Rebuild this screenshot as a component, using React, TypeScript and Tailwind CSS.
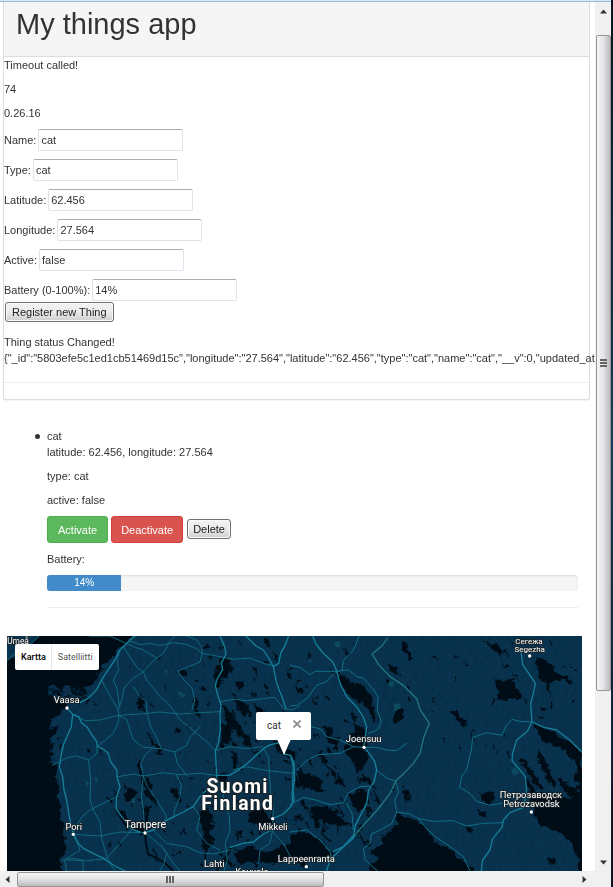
import React from "react";

const fields = [
  { id: "name", label: "Name:", value: "cat" },
  { id: "type", label: "Type:", value: "cat" },
  { id: "latitude", label: "Latitude:", value: "62.456" },
  { id: "longitude", label: "Longitude:", value: "27.564" },
  { id: "active", label: "Active:", value: "false" },
  { id: "battery", label: "Battery (0-100%):", value: "14%" },
];

const status =
  '{"_id":"5803efe5c1ed1cb51469d15c","longitude":"27.564","latitude":"62.456","type":"cat","name":"cat","__v":0,"updated_at"';

// Roads of the western half, in map units.
const westMajor = [
  "405,18 388,32 370,50 358,62 345,90 325,118 305,150 290,178 280,190 262,206 240,218",
  "201,234 210,244 218,253 236,260 246,280 262,292 276,315 290,335 292,348 310,358 325,370 332,395 350,420 352,446 360,470 350,500 348,535 362,556 372,568 396,598 420,606",
  "218,253 214,290 205,310 190,345 184,372 178,410 188,440 192,480 200,510 208,560 214,590 220,613 234,640 250,655 275,668 310,685 345,708 375,723",
  "660,18 674,50 678,72 664,100 668,118 650,150 646,168 655,200 663,225 660,250 661,300 655,340 646,362 648,400 650,436",
  "738,18 768,48 790,60 806,84 820,110 828,150 836,176 846,200 858,236",
  "820,110 836,100 842,70 856,44 866,18",
  "650,436 688,436 712,422 740,402 760,384 790,356 812,344 848,336",
  "852,372 872,376 880,410 878,470 882,510 872,530 850,552 818,566",
  "435,608 460,600 482,580 510,566 550,546 580,530 600,500 630,470 650,440",
  "690,652 730,640 760,636 790,612 816,600",
];
const westMinor = [
  "370,50 384,72 400,95 414,116 430,125 440,150 460,175 480,200 504,220 520,240 540,270 562,286 590,310 620,335 646,362",
  "388,32 420,44 450,40 480,46 520,38 556,42 590,56 606,70 650,78 700,88 750,84 790,100 820,108",
  "525,18 508,36 490,70 460,92 430,125 400,144 372,174 368,200 355,240",
  "305,150 318,176 332,200 355,240 356,272 340,310 316,330 290,350",
  "358,62 352,92 356,120 340,150 352,180 358,230",
  "218,253 256,272 300,270 330,262 355,256 420,252 480,246 540,252 600,248 660,245",
  "560,18 590,30 606,54 606,72 600,96 566,110 532,124 552,150 576,174 584,210 576,240",
  "660,215 700,208 740,212 790,206 824,202 852,236 880,240 900,226",
  "400,170 420,200 438,214 442,255 452,290 468,320 484,356 524,366 560,346 572,320 600,290",
  "355,256 380,268 390,300 400,330 430,352 484,356",
  "524,366 532,400 560,436",
  "158,406 200,384 226,378 250,384 266,390 292,370 290,350",
  "266,390 272,450 270,510 280,540 300,576 306,630 320,676 330,700 345,723",
  "355,440 400,432 430,438 490,428 540,434 600,430 650,436",
  "430,438 422,400 440,370 460,352",
  "430,438 442,470 470,510 500,560 494,576",
  "430,438 424,500 430,540 435,608",
  "530,436 544,466 540,500 524,540 520,564",
  "350,500 310,520 270,540 244,562 220,608",
  "220,613 300,618 360,606 435,608",
  "435,608 462,630 486,650 520,700 540,723",
  "460,600 500,640 560,650 600,668 640,672 690,660",
  "396,598 360,640 318,686 260,692 200,690",
  "186,690 220,685 248,690 250,723",
  "214,590 230,630 240,660 194,690 200,723",
  "650,440 668,480 672,520 688,556 690,600 676,640 682,690 672,723",
  "646,362 690,350 740,356 786,350",
  "790,356 806,380 808,430 812,490 820,540 818,566",
  "700,420 740,410 790,420 878,430",
  "818,566 822,610 850,640 866,670 880,700",
  "660,660 620,640 590,600 600,560 580,530",
  "480,723 492,700 500,670 486,650",
  "818,600 810,640 780,660 776,700",
  "21,92 50,66 90,44 118,18",
  "268,18 330,18 400,50 430,60 470,84",
];
// Roads of the eastern half, measured from its own left edge.
const eastMajor = [
  "68,18 78,42 100,70 128,96 140,122 150,160 170,200 200,230 220,262 230,290 222,350 240,374 254,394 260,420 252,456 236,480 230,520 196,586 190,624 150,660 120,690 110,723",
  "694,70 698,104 716,130 736,160 730,190 722,220 726,276 712,304 680,330 668,370 666,392 690,420 706,440 710,482 700,532 660,548 640,570 636,592 608,626 600,660 578,690 574,723",
  "726,276 762,292 800,300 836,328 876,366",
  "190,616 160,650 130,664",
  "4,380 12,400 14,450 6,490 8,520",
];
const eastBorder = ["292,24 276,48 246,72 266,104 300,140 340,166 380,206 390,238 418,280 402,320 390,370 370,400 342,430 318,452 300,490 262,540 216,590 186,626"];
const eastMinor = [
  "208,18 190,60 160,92 156,122",
  "0,106 30,112 60,134 76,124 140,124 176,120 200,140 220,144 252,180 264,200 262,240 274,276 262,300 236,310",
  "140,122 108,156 80,166 50,206 20,226 0,228",
  "64,290 90,296 110,320 150,330 190,350 222,352",
  "222,352 260,352 290,360 320,362 350,340",
  "190,350 150,370 84,374 50,392 20,420",
  "260,420 290,444 318,454 326,486 314,510 320,546 306,580 270,600 244,612 240,640 220,656 226,690 262,723",
  "320,546 360,552 386,566 430,574 490,572 530,588 580,580 638,578",
  "386,566 410,596 436,620 480,650 520,680 540,723",
  "726,276 690,274 666,268 650,284 636,316 590,308 548,322 544,360 530,420 516,438 508,472 540,490 560,514 600,526 636,520",
  "0,524 40,502 76,510 120,524 160,518 174,490 210,470 240,468",
  "0,606 50,600 90,630 120,664 126,690",
  "170,520 186,550 190,600",
];
const westLakes = [
  "411,205 424,196 436,220 430,240 414,236",
  "582,200 596,215 594,240 604,262 586,250 580,225",
  "640,120 664,98 680,100 704,118 690,130 664,150 652,180 642,150",
  "668,80 682,84 690,96 674,110 664,96",
  "664,226 690,244 710,270 730,300 746,316 760,362 736,340 716,320 694,290 672,262",
  "664,280 700,284 690,330 660,366 664,320",
  "700,200 724,216 746,232 738,260 724,250",
  "350,540 370,550 390,576 430,570 436,520 452,530 440,566 446,600 440,620 412,610 380,596",
  "372,490 392,470 410,480 398,510 380,516",
  "410,396 420,392 434,440 456,460 452,480 474,516 470,530 440,500 420,440",
  "442,300 452,320 468,350 456,344",
  "466,340 490,356 480,366 494,380 470,370",
  "600,540 620,530 634,560 630,600 636,640 616,690 606,650 612,600 598,570",
  "654,430 676,430 692,480 672,470 650,450",
  "740,548 790,540 820,580 780,590 750,570",
  "700,672 750,646 800,668 860,640 900,660 896,700 850,692 806,700 760,690 722,704",
  "820,330 870,340 860,360 890,366 884,400 860,380 830,366",
  "690,360 714,374 710,410 696,420 700,390",
  "510,480 530,470 546,520 526,510",
  "706,156 736,160 716,180",
  "760,220 792,244 800,280 780,270",
  "528,290 540,300 536,312 526,306",
  "530,122 552,116 562,132 544,138",
];
const eastLakes = [
  "140,132 170,146 186,160 216,164 230,184 242,190 246,220 262,262 266,280 244,264 224,220 190,210 168,186 150,166",
  "186,240 200,260 196,284 220,290 230,330 228,360 236,380 222,410 204,434 190,392 170,370 160,350 196,330 170,320 198,306",
  "612,144 640,154 650,150 674,140 670,162 686,180 696,206 660,208 646,214 620,206 626,180",
  "734,80 760,88 790,110 800,130 846,150 852,162 820,150 790,150 776,162 782,200 790,226 780,240 784,206 764,160 744,124",
  "590,38 620,44 640,60 634,84 610,60",
  "332,26 352,40 350,56 372,90 356,90 340,60",
  "320,240 342,240 338,270 320,284 308,276",
  "296,100 318,110 320,134 300,124",
  "478,240 500,244 512,262 534,280 520,290 500,264",
  "566,486 590,490 602,484 616,500 608,518 590,526 576,510",
  "336,476 360,484 364,506 346,516 336,500",
  "560,536 586,546 590,564 570,556",
  "776,684 794,680 796,706 780,708",
  "320,540 336,560 362,564 404,590 410,604 430,626 434,640 478,656 500,680 532,700 548,723 240,723 236,700 272,690 240,664 282,640 270,622 300,604 306,590 320,588",
  "732,278 756,290 790,306 828,330 858,352 876,366 876,474 852,450 862,420 850,390 826,366 800,352 766,340 744,310",
  "876,464 860,484 876,500 876,723 864,723 868,690 852,650 830,630 820,610 790,604 770,590 750,586 736,560 726,530 712,480 726,470 740,486 772,492 800,488 830,512 846,500 820,480 800,450 812,440 840,470",
  "742,352 760,380 776,420 800,470 790,478 766,436 746,400",
  "690,384 706,390 740,440 764,480 748,480 718,440",
  "704,440 720,450 738,486 716,484",
  "20,426 50,430 84,440 100,456 90,470 110,486 80,486 60,470 30,470",
  "60,530 110,530 140,540 156,572 190,580 150,590 112,578 92,570 80,596 64,566",
  "174,494 220,476 240,500 234,520 206,546 186,520",
  "0,620 30,596 50,610 80,620 106,650 130,666 90,690 60,690 40,710 20,690 0,690",
  "100,290 130,300 120,314 150,326 140,350 110,330",
  "528,592 550,594 546,604 532,606",
];

type Zone = [number, number, number, number, number, number];

// x, y, width, height, number of ponds, largest radius
const pondZones: Zone[] = [
  [250, 60, 330, 330, 12, 5],
  [330, 420, 250, 290, 28, 8],
  [580, 30, 320, 380, 52, 11],
  [600, 430, 300, 280, 40, 12],
  [890, 270, 240, 380, 60, 13],
  [890, 30, 200, 250, 16, 8],
  [1120, 30, 300, 460, 18, 6],
  [1420, 30, 310, 240, 20, 9],
  [1390, 300, 160, 330, 6, 5],
  [145, 165, 130, 50, 26, 9],
  [150, 220, 36, 160, 6, 6],
];

function makePonds(zones: Zone[]) {
  let seed = 20161;
  const rand = () => {
    seed = (seed * 16807) % 2147483647;
    return seed / 2147483647;
  };
  const ponds: string[] = [];
  zones.forEach(([x, y, w, h, count, size]) => {
    for (let i = 0; i < count; i++) {
      const cx = x + rand() * w;
      const cy = y + rand() * h;
      const long = 4 + rand() * rand() * size * 2;
      const short = 2 + rand() * size * 0.4;
      const tilt = 0.7 + rand() * 0.6;
      const points: string[] = [];
      for (let k = 0; k < 10; k++) {
        const a = (k / 10) * Math.PI * 2;
        const r = 0.55 + rand() * 0.75;
        const px = Math.cos(a) * long * r;
        const py = Math.sin(a) * short * r;
        const dx = px * Math.cos(tilt) - py * Math.sin(tilt);
        const dy = px * Math.sin(tilt) + py * Math.cos(tilt);
        points.push(`${Math.round(cx + dx)},${Math.round(cy + dy)}`);
      }
      ponds.push(points.join(" "));
    }
  });
  return ponds;
}

const ponds = makePonds(pondZones);

const places = [
  { text: "Umeå", x: 54, y: 42, size: 25 },
  { text: "Vaasa", x: 200, y: 219, size: 28, dot: [201, 234] },
  { text: "Pori", x: 221, y: 599, size: 28, dot: [220, 613] },
  { text: "Tampere", x: 436, y: 593, size: 32, dot: [435, 609] },
  { text: "Mikkeli", x: 819, y: 599, size: 28, dot: [818, 566] },
  { text: "Lahti", x: 643, y: 712, size: 28, dot: [643, 727] },
  { text: "Kouvola", x: 756, y: 734, size: 28 },
  { text: "Lappeenranta", x: 919, y: 695, size: 28, dot: [919, 710] },
  { text: "Joensuu", x: 1091, y: 336, size: 28, dot: [1092, 352] },
  { text: "Сегежа", x: 1587, y: 43, size: 24 },
  { text: "Segezha", x: 1589, y: 66, size: 24, dot: [1589, 78] },
  { text: "Петрозаводск", x: 1593, y: 503, size: 28 },
  { text: "Petrozavodsk", x: 1594, y: 531, size: 28, dot: [1594, 546] },
];

function Lines({ list, color, width }: { list: string[]; color: string; width: number }) {
  return (
    <g fill="none" stroke={color} strokeWidth={width} strokeLinejoin="round" strokeLinecap="round">
      {list.map((points) => (
        <polyline key={points} points={points} />
      ))}
    </g>
  );
}

function Areas({ list, color }: { list: string[]; color: string }) {
  return (
    <g fill={color}>
      {list.map((points) => (
        <polygon key={points} points={points} />
      ))}
    </g>
  );
}

function MapDrawing() {
  return (
    <svg
      viewBox="21 18 1725 705"
      preserveAspectRatio="xMidYMin slice"
      className="block h-full w-full font-['Roboto','Noto_Sans',sans-serif]"
      role="img"
      aria-label="Map of Finland"
    >
      <defs>
        <filter id="relief" x="0" y="0" width="100%" height="100%">
          <feTurbulence type="fractalNoise" baseFrequency="0.07 0.05" numOctaves="4" seed="7" result="noise" />
          <feDiffuseLighting in="noise" surfaceScale="3" lightingColor="#b8b8b8">
            <feDistantLight azimuth="215" elevation="45" />
          </feDiffuseLighting>
        </filter>
        <filter id="shore" x="-5%" y="-5%" width="110%" height="110%">
          <feTurbulence type="fractalNoise" baseFrequency="0.06" numOctaves="3" seed="3" result="wobble" />
          <feDisplacementMap in="SourceGraphic" in2="wobble" scale="22" xChannelSelector="R" yChannelSelector="G" />
        </filter>
      </defs>
      <rect x="21" y="18" width="1725" height="705" fill="#072e49" />
      <rect x="21" y="18" width="1725" height="705" filter="url(#relief)" opacity="0.25" className="mix-blend-soft-light" />
      <Areas
        color="#0c4a60"
        list={[
          "530,180 558,194 552,204 536,196",
          "435,476 456,486 450,500 436,494",
          "395,500 406,506 402,522 392,514",
          "492,118 504,124 498,132",
          "254,450 268,458 262,470",
          "282,440 294,444 290,460",
          "1003,36 1020,34 1022,50 1008,52",
          "924,88 936,92 932,102",
          "1166,156 1182,152 1180,170 1168,170",
          "1180,222 1200,220 1202,240 1184,244",
          "1532,420 1546,412 1560,430 1540,436",
        ]}
      />
      <g filter="url(#shore)">
        <polygon
          fill="#000e18"
          points="118,-10 396,-10 396,18 376,40 352,58 332,90 306,104 312,124 290,134 284,160 256,176 262,190 236,196 212,206 186,196 176,204 196,216 204,232 184,240 182,256 160,262 150,300 176,284 166,310 148,326 160,346 150,368 152,400 174,406 166,440 180,476 172,500 186,540 178,570 196,590 190,616 200,650 182,680 184,750 -10,750 -10,98 40,84 80,58 118,18"
        />
        <Areas color="#072e49" list={["148,168 164,164 178,180 200,162 228,178 238,164 250,190 220,206 180,196 160,206 144,190"]} />
        <Areas color="#000e18" list={ponds} />
        <Areas color="#000e18" list={westLakes} />
        <g transform="translate(870 0)">
          <Areas color="#000e18" list={eastLakes} />
          <Areas color="#000e18" list={["240,710 548,710 560,750 240,750", "868,470 900,470 900,750 868,750"]} />
        </g>
      </g>
      <polyline points="435,612 438,640 444,672 470,684 496,700 520,723" fill="none" stroke="#000e18" strokeWidth="6" />
      <polyline points="692,652 684,672 664,696 650,723" fill="none" stroke="#000e18" strokeWidth="6" />
      <Lines list={westMinor} color="#126880" width={3} />
      <Lines list={westMajor} color="#157f99" width={4} />
      <g transform="translate(870 0)">
        <Lines list={eastMinor} color="#127088" width={3} />
        <Lines list={eastBorder} color="#22777c" width={4} />
        <Lines list={eastMajor} color="#157f99" width={4} />
      </g>
      <g textAnchor="middle" fill="#ffffff" stroke="#1b2226" strokeWidth="5" strokeLinejoin="round" className="[paint-order:stroke]">
        {places.map((p) => (
          <g key={p.text}>
            {p.dot && <circle cx={p.dot[0]} cy={p.dot[1]} r="5" strokeWidth="2" />}
            <text x={p.x} y={p.y} fontSize={p.size}>
              {p.text}
            </text>
          </g>
        ))}
        <g fontSize="58" fontWeight="700" strokeWidth="7" className="tracking-[4px]">
          <text x="713" y="488">Suomi</text>
          <text x="713" y="541">Finland</text>
        </g>
      </g>
    </svg>
  );
}

const arrow = "block h-[5px] w-[7px] fill-[#333]";
const nativeButton =
  "h-5 rounded-[3px] border border-[#707070] bg-linear-to-b from-[#f2f2f2] from-0% via-[#ebebeb] via-50% to-[#cfcfcf] leading-4 text-[#222] shadow-[inset_0_0_0_1px_#fafafa]";

function VerticalScrollbar() {
  return (
    <div className="flex w-[16px] shrink-0 flex-col items-center bg-[#f0f0f0]">
      <button aria-label="Scroll up" className="flex h-[33px] w-full shrink-0 justify-center pt-[7px]">
        <svg viewBox="0 0 7 5" className={arrow}><path d="M0 4.500 3.500 0.500 7 4.500z" /></svg>
      </button>
      <div className="flex w-[15px] flex-[656] flex-col items-center justify-center gap-px rounded-[2px] border border-[#979797] bg-linear-to-r from-[#f5f5f5] via-[#e3e3e6] to-[#bcbcc0]">
        <span className="h-[2px] w-[7px] bg-[#666]" />
        <span className="h-[2px] w-[7px] bg-[#666]" />
        <span className="h-[2px] w-[7px] bg-[#666]" />
      </div>
      <div className="flex-[163]" />
      <button aria-label="Scroll down" className="flex h-[17px] w-full shrink-0 justify-center pt-[6px]">
        <svg viewBox="0 0 7 5" className={arrow}><path d="M0 0.500 3.500 4.500 7 0.500z" /></svg>
      </button>
    </div>
  );
}

function HorizontalScrollbar() {
  return (
    <div className="flex h-4 shrink-0 items-center bg-[#f0f0f0] pr-[18px]">
      <button aria-label="Scroll left" className="flex h-full w-[17px] shrink-0 items-center pl-[5px]">
        <svg viewBox="0 0 5 7" className="h-[7px] w-[5px] fill-[#333]"><path d="M4.500 0 0.500 3.500 4.500 7z" /></svg>
      </button>
      <div className="flex h-[15px] flex-[307] items-center justify-center gap-px rounded-[2px] border border-[#979797] bg-linear-to-b from-[#f5f5f5] via-[#e0e0e2] to-[#bcbcc0]">
        <span className="h-[7px] w-[2px] bg-[#666]" />
        <span className="h-[7px] w-[2px] bg-[#666]" />
        <span className="h-[7px] w-[2px] bg-[#666]" />
      </div>
      <div className="flex-[254]" />
      <button aria-label="Scroll right" className="flex h-full w-[17px] shrink-0 items-center justify-center">
        <svg viewBox="0 0 5 7" className="h-[7px] w-[5px] fill-[#333]"><path d="M0.500 0 4.500 3.500 0.500 7z" /></svg>
      </button>
    </div>
  );
}

export default function App() {
  return (
    <div className="flex h-screen overflow-hidden bg-white font-['Liberation_Sans',Arial,sans-serif] text-[11px] leading-4 text-[#333]">
      <div className="flex min-w-0 flex-1 flex-col">
        <div className="h-[2px] shrink-0 border-b border-[#9fb9d0] bg-[#d6e8f8]" />
        <div className="flex min-h-0 flex-1">
          <main className="flex min-w-0 flex-1 flex-col overflow-hidden">
            <section className="mr-[5px] ml-[3px] shrink-0 rounded-b-[3px] border border-t-0 border-[#ddd] shadow-[0_1px_1px_#0000000d]">
              <header className="border-b border-[#ddd] bg-[#f5f5f5] px-3 pt-[6px] pb-4">
                <h1 className="text-[29px] leading-8">My things app</h1>
              </header>
              <p className="mb-2">Timeout called!</p>
              <p className="mb-2">74</p>
              <p className="mb-2">0.26.16</p>
              <form onSubmit={(e) => e.preventDefault()}>
                <div className="flex flex-col gap-2">
                  {fields.map((f) => (
                    <div key={f.id} className="flex items-center gap-[2px]">
                      <label htmlFor={f.id}>{f.label}</label>
                      <input
                        id={f.id}
                        defaultValue={f.value}
                        className="h-[22px] w-[145px] rounded-[2px] border border-[#dfe3ec] border-t-[#abadb3] bg-white px-[2px]"
                      />
                    </div>
                  ))}
                </div>
                <button className={`${nativeButton} mt-px ml-px block px-[6px]`}>Register new Thing</button>
              </form>
              <p className="mt-3">Thing status Changed!</p>
              <p className="whitespace-nowrap">{status}</p>
              <hr className="my-4 border-[#eee]" />
            </section>

            <ul className="mt-7 mr-[17px] ml-[35px] shrink-0">
              <li className="flex gap-[7px]">
                <span className="mt-[6px] size-[5px] shrink-0 rounded-full bg-[#333]" />
                <div className="min-w-0 flex-1">
                  <p>cat</p>
                  <p className="mb-2">latitude: 62.456, longitude: 27.564</p>
                  <p className="mb-2">type: cat</p>
                  <p className="mb-2">active: false</p>
                  <div className="mb-2 flex items-start gap-[3px]">
                    <button className="h-[27px] rounded-[3px] border border-[#4cae4c] bg-[#5cb85c] px-[10px] text-white">Activate</button>
                    <button className="h-[27px] rounded-[3px] border border-[#d43f3a] bg-[#d9534f] px-[9px] text-white">Deactivate</button>
                    <button className={`${nativeButton} mt-[3px] ml-px px-[5px]`}>Delete</button>
                  </div>
                  <p className="mb-2">Battery:</p>
                  <div
                    role="progressbar"
                    aria-label="Battery"
                    aria-valuenow={14}
                    aria-valuemin={0}
                    aria-valuemax={100}
                    className="h-4 overflow-hidden rounded-[3px] bg-[#f5f5f5] shadow-[inset_0_1px_2px_#0000001a]"
                  >
                    <div className="h-full w-[14%] bg-[#428bca] text-center text-[10px] text-white">14%</div>
                  </div>
                  <hr className="mt-4 border-[#eee]" />
                </div>
              </li>
            </ul>

            <section className="relative mt-7 mr-[13px] ml-[7px] min-h-0 flex-1 overflow-hidden font-['Roboto','Noto_Sans',sans-serif]">
              <MapDrawing />
              <div className="absolute top-2 left-2 flex h-[26px] rounded-[2px] bg-white text-[9px]">
                <button className="border-r border-[#e8e8e8] pr-[5px] pl-[6px] font-medium text-black">Kartta</button>
                <button className="px-[6px] text-[#565656]">Satelliitti</button>
              </div>
              <div className="absolute top-[76px] left-[249px] flex h-[28px] w-[55px] items-center justify-between rounded-[2px] bg-white pr-[10px] pl-[11px] text-[10px]">
                <span>cat</span>
                <button aria-label="Close" className="mb-1">
                  <svg viewBox="0 0 8 8" className="h-2 w-2 stroke-[#888]" strokeWidth="1.700"><path d="M0.500 0.500 7.500 7.500M7.500 0.500 0.500 7.500" /></svg>
                </button>
                <svg viewBox="0 0 14 16" className="absolute top-[27px] left-[21px] h-4 w-[14px] fill-white"><path d="M0 0H14L7 16z" /></svg>
              </div>
            </section>
          </main>
          <VerticalScrollbar />
        </div>
        <HorizontalScrollbar />
      </div>
      <div className="w-[2px] shrink-0 bg-linear-to-b from-[#081520] via-[#173a58] to-[#0d1120]" />
    </div>
  );
}
